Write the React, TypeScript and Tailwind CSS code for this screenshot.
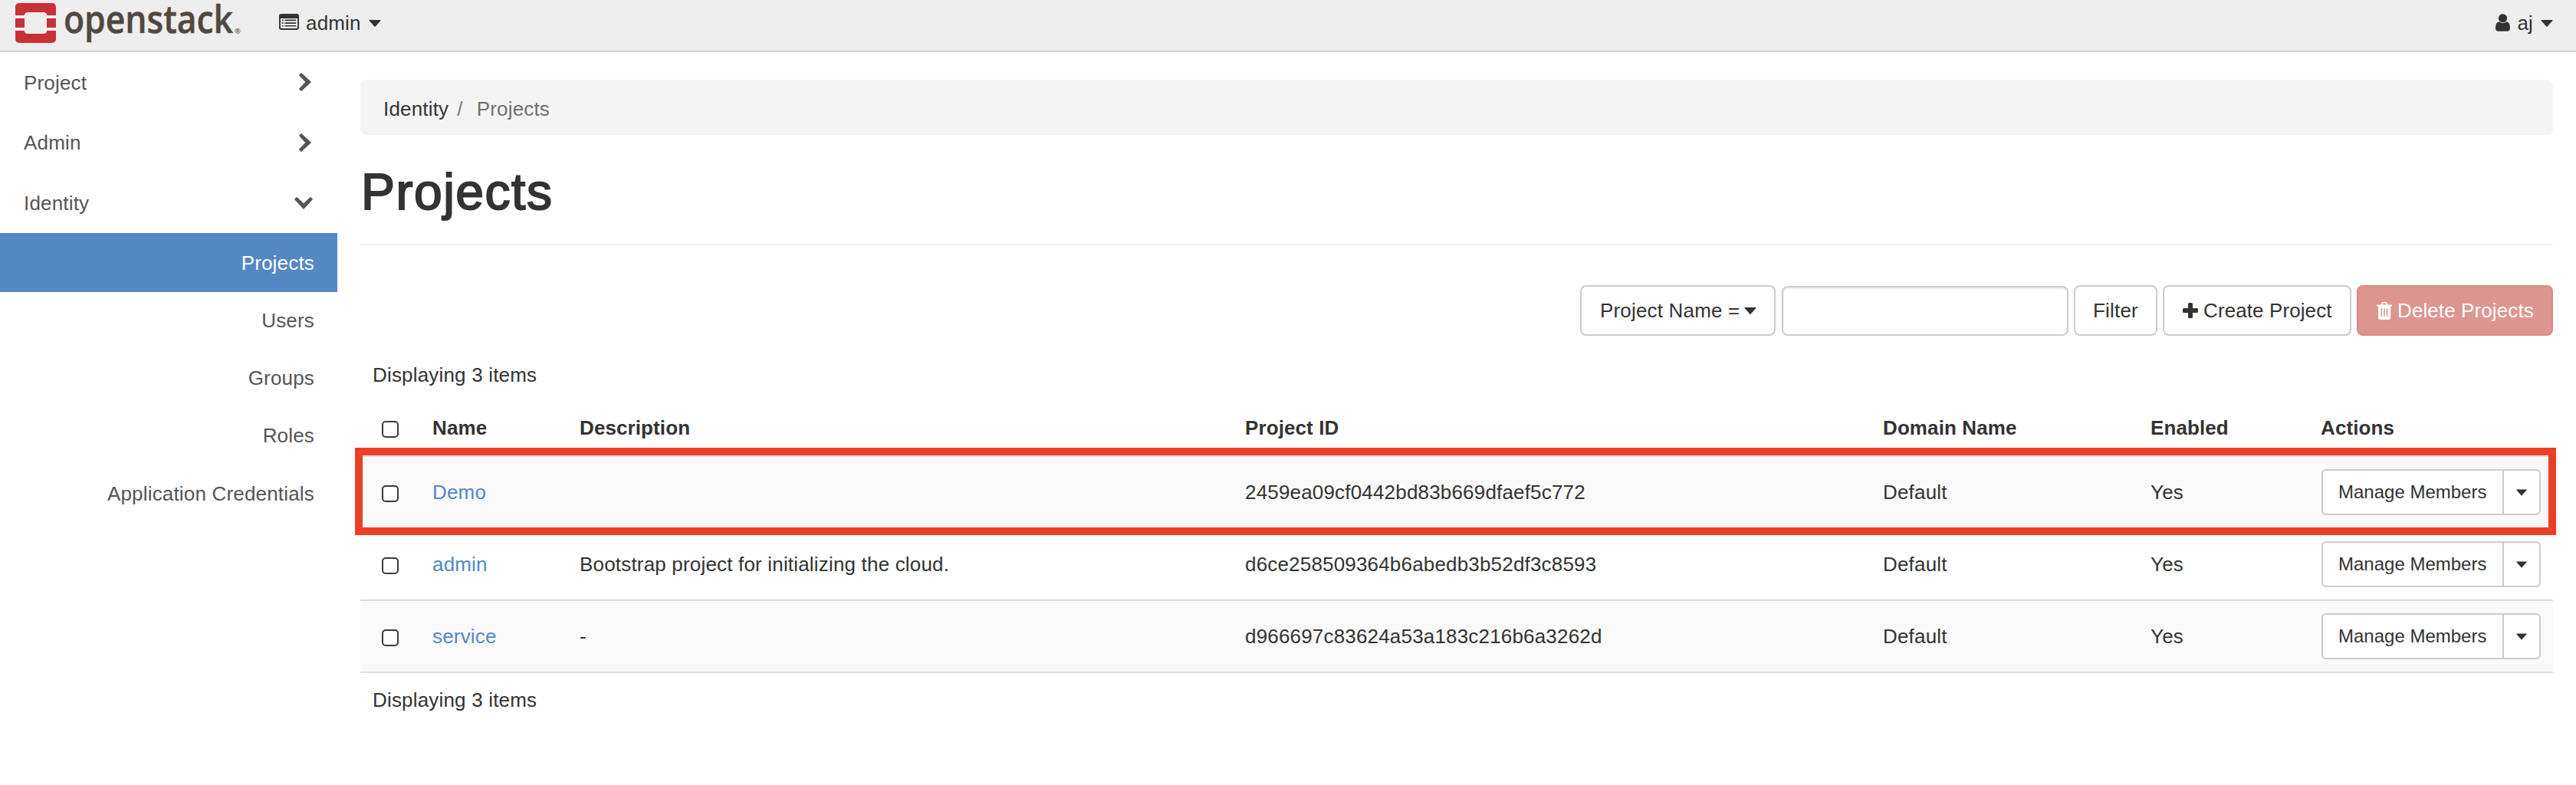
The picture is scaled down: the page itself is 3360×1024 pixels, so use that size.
import React from "react";

type IconProps = { className?: string };

const Caret = ({ className = "" }: IconProps) => (
  <svg viewBox="0 0 16 9" className={"shrink-0 " + className} fill="currentColor">
    <path d="M1 0h14q1 .3.4 1.1L8.7 8.6q-.7.6-1.4 0L.6 1.1Q0 .3 1 0z" />
  </svg>
);

const ChevronRight = () => (
  <svg viewBox="0 0 16 24" className="h-6 w-4 shrink-0" fill="currentColor">
    <path d="M3.6.4 15.3 11.2q.8.8 0 1.6L3.6 23.6q-.8.5-1.5-.2L.5 21.7q-.7-.8 0-1.5L8.2 12 .5 3.8q-.7-.7 0-1.500L2.100.6Q2.800-.1 3.600.4z" />
  </svg>
);

const ChevronDown = () => (
  <svg viewBox="0 0 24 16" className="-mr-[2px] h-4 w-6 shrink-0" fill="currentColor">
    <path d="M.4 3.600 11.200 15.300q.8.8 1.600 0L23.600 3.600q.5-.8-.2-1.500L21.700.5q-.8-.7-1.500 0L12 8.200 3.800.5Q3.100-.2 2.300.5L.6 2.100Q-.1 2.800.4 3.600z" />
  </svg>
);

const ListIcon = () => (
  <svg viewBox="0 0 26 21" className="h-[21px] w-[26px] shrink-0" fill="currentColor">
    <path fillRule="evenodd" d="M3 0h20a3 3 0 0 1 3 3v15a3 3 0 0 1-3 3H3a3 3 0 0 1-3-3V3a3 3 0 0 1 3-3zM1.900 6v11.900q0 1.200 1.200 1.200h19.800q1.200 0 1.200-1.200V6z" />
    <path d="M3.800 7.600h1.900v1.600H3.800zM7.500 7.600h14.700v1.600H7.500zM3.800 11.300h1.900v1.600H3.800zM7.500 11.300h14.700v1.600H7.500zM3.800 15h1.900v1.600H3.800zM7.500 15h14.700v1.600H7.500z" />
  </svg>
);

const UserIcon = () => (
  <svg viewBox="0 0 19 23" className="h-[23px] w-[19px] shrink-0" fill="currentColor">
    <circle cx="9.500" cy="5.800" r="5.600" />
    <path d="M4.900 10.300q4.600 3.800 9.200 0 4.900.6 4.900 8.200 0 4.300-3.700 4.300H3.700Q0 22.800 0 18.500 0 10.900 4.900 10.300z" />
  </svg>
);

const PlusIcon = () => (
  <svg viewBox="0 0 20 20" className="h-5 w-5 shrink-0" fill="currentColor">
    <path d="M8.500 0h3q1.500 0 1.500 1.500V7h5.500Q20 7 20 8.500v3q0 1.500-1.500 1.500H13v5.500q0 1.500-1.500 1.500h-3Q7 20 7 18.500V13H1.500Q0 13 0 11.500v-3Q0 7 1.500 7H7V1.500Q7 0 8.500 0z" />
  </svg>
);

const TrashIcon = () => (
  <svg viewBox="0 0 20 23" className="h-[23px] w-5 shrink-0" fill="currentColor">
    <path fillRule="evenodd" d="M8 0h4.200q1 0 1.400.9L14.800 3.600H19.400q.6 0 .6.600v.7q0 .6-.6.600H18.200v14.100Q18.200 23 15.600 23H4.600Q2 23 2 19.600V5.500H.6Q0 5.500 0 4.900V4.200q0-.6.6-.6H5.400L6.600.9Q7 0 8 0zM8.200 1.800 7.400 3.600h5.400l-.8-1.800zM5.600 8.200v10.300h1.600V8.200zM9.200 8.200v10.300h1.600V8.200zM12.800 8.200v10.300h1.600V8.200z" />
  </svg>
);

const Logo = () => (
  <svg viewBox="0 0 300 60" className="h-[60px] w-[300px] shrink-0 tracking-normal" role="img" aria-label="openstack">
    <g fill="#c93138">
      <path d="M5 4H48a5 5 0 0 1 5 5V20H41.300a4.500 4.500 0 0 0-4.500-4H16.200a4.500 4.500 0 0 0-4.500 4H0V9A5 5 0 0 1 5 4z" />
      <path d="M0 24H12V36H0zM41 24H53V36H41z" />
      <path d="M0 40H11.700a4.500 4.500 0 0 0 4.500 4H36.800a4.500 4.500 0 0 0 4.500-4H53V51a5 5 0 0 1-5 5H5a5 5 0 0 1-5-5z" />
    </g>
    <text x="63" y="43.300" textLength="221" lengthAdjust="spacingAndGlyphs" fill="#504840" stroke="#504840" strokeWidth="0.500" className="font-['Open_Sans'] text-[50px] font-semibold">
      openstack
    </text>
    <text x="286" y="43.500" fill="#504840" className="font-['Open_Sans'] text-[9.500px] font-semibold">®</text>
  </svg>
);

const groups = [
  { label: "Project", open: false },
  { label: "Admin", open: false },
  { label: "Identity", open: true },
];

const identityPanels = ["Users", "Groups", "Roles", "Application Credentials"];

const rows = [
  { name: "Demo", description: "", id: "2459ea09cf0442bd83b669dfaef5c772" },
  { name: "admin", description: "Bootstrap project for initializing the cloud.", id: "d6ce258509364b6abedb3b52df3c8593" },
  { name: "service", description: "-", id: "d966697c83624a53a183c216b6a3262d" },
];

const columns = "grid grid-cols-[94px_192px_868px_832px_349px_223px_1fr] items-center";

const Checkbox = () => (
  <input type="checkbox" className="ml-7 mt-[3px] block size-[22px] appearance-none rounded-[5px] border-2 border-[#3b3b3b] bg-white" />
);

const toolbarButton = "flex h-[66px] items-center rounded-lg border-2 border-[#ccc] bg-white";

export default function App() {
  return (
    <div className="h-[1024px] w-[3360px] overflow-hidden bg-white font-['Liberation_Sans',Arial,sans-serif] text-[26px] leading-9 tracking-[0.18px] text-[#333]">
      <header className="flex h-[68px] items-start border-b-2 border-[#ccc] bg-[#eee] pl-5 pr-[30px]">
        <Logo />
        <div className="ml-11 flex h-[57px] items-center">
          <ListIcon />
          <span className="ml-[9px] mt-[3px]">admin</span>
          <Caret className="ml-2.5 mt-1 h-[9px] w-4" />
        </div>
        <div className="ml-auto flex h-[58px] items-center">
          <UserIcon />
          <span className="ml-[9px] mt-0.5">aj</span>
          <Caret className="ml-2.5 mt-[3px] h-[9px] w-4" />
        </div>
      </header>

      <div className="flex">
        <nav className="w-[440px] shrink-0 text-[#555]">
          {groups.map((g) => (
            <div key={g.label} className="flex h-[78.67px] items-center justify-between pl-[31px] pr-[34px]">
              <span className="mt-[1px]">{g.label}</span>
              {g.open ? <ChevronDown /> : <ChevronRight />}
            </div>
          ))}
          <div className="flex h-[77px] items-center justify-end bg-[#5488c4] pr-[30px] pt-[1px] text-white">Projects</div>
          {identityPanels.map((p) => (
            <div key={p} className="flex h-[75.300px] items-center justify-end pb-[2px] pr-[30px]">{p}</div>
          ))}
        </nav>

        <main className="ml-[30px] w-[2860px] pt-9">
          <div className="flex h-[72px] items-center rounded-lg bg-[#f4f4f4] pl-[30px] pt-[3px]">
            <span>Identity</span>
            <span className="ml-[11px] text-[#777]">/</span>
            <span className="ml-[18px] text-[#6f6f6f]">Projects</span>
          </div>
          <h1 className="mt-9 h-[108px] border-b-2 border-[#eee]">
            <span className="block pl-[1px] pt-[1px] text-[66px] leading-[74px] tracking-[1.500px] [-webkit-text-stroke:2px_#333]">Projects</span>
          </h1>

          <div className="mt-[52px] flex items-end justify-end gap-[7px]">
            <button className={toolbarButton + " mr-[1px] w-[255px] pl-6"}>
              <span>Project Name =</span>
              <Caret className="ml-1.5 h-[9px] w-4" />
            </button>
            <input className="h-[65px] w-[374px] rounded-lg border-2 border-[#ccc] bg-white shadow-[inset_0_2px_2px_rgba(0,0,0,0.075)]" />
            <button className={toolbarButton + " w-[109px] justify-center"}>Filter</button>
            <button className={toolbarButton + " w-[246px] pl-6"}>
              <PlusIcon />
              <span className="ml-[7px] tracking-[0.1px]">Create Project</span>
            </button>
            <button className="flex h-[66px] w-[256px] items-center rounded-lg border-2 border-[#da8a83] bg-[#dc968f] pl-6 text-white">
              <TrashIcon />
              <span className="ml-[7px] tracking-[0.1px]">Delete Projects</span>
            </button>
          </div>

          <div className="mt-[33px] pl-4">Displaying 3 items</div>

          <section>
            <div className={columns + " h-[87px] pb-0 pt-[15px] font-bold tracking-[0.1px]"}>
              <Checkbox />
              <span>Name</span>
              <span>Description</span>
              <span>Project ID</span>
              <span>Domain Name</span>
              <span>Enabled</span>
              <span className="-ml-[1px]">Actions</span>
            </div>
            <div className="relative border-b-2 border-[#ddd]">
              {rows.map((r) => (
                <div key={r.name} className={columns + " h-[94px] border-t-2 border-[#ddd] odd:bg-[#f9f9f9]"}>
                  <Checkbox />
                  <span className="text-[#5488c4]">{r.name}</span>
                  <span>{r.description}</span>
                  <span>{r.id}</span>
                  <span>Default</span>
                  <span>Yes</span>
                  <div className="flex h-[60px] w-[286px] rounded-[6px] border-2 border-[#ccc] bg-white text-[24px] tracking-normal">
                    <span className="flex w-[236px] items-center border-r-2 border-[#ccc] pl-5">Manage Members</span>
                    <span className="flex flex-1 items-center justify-center">
                      <Caret className="h-[9px] w-[14px]" />
                    </span>
                  </div>
                </div>
              ))}
              <div className="pointer-events-none absolute -left-[7px] -top-2.5 h-[114px] w-[2871px] border-10 border-[#ea4027]" />
            </div>
          </section>

          <div className="mt-[17px] pl-4">Displaying 3 items</div>
        </main>
      </div>
    </div>
  );
}
